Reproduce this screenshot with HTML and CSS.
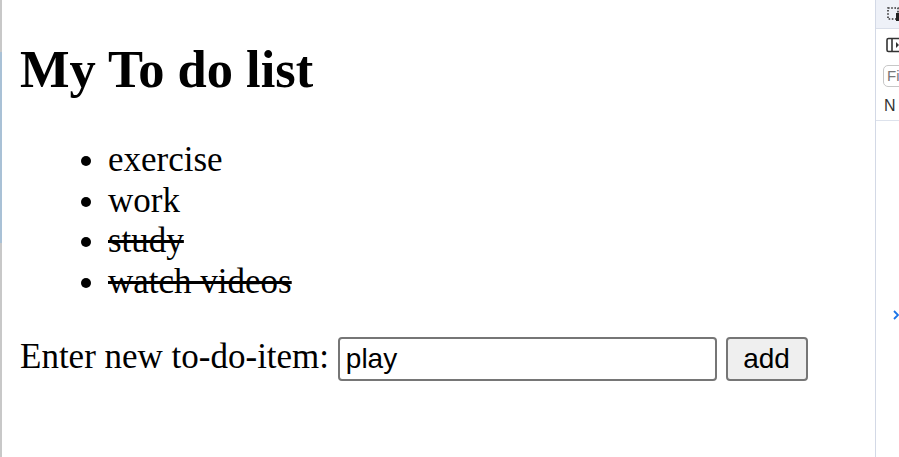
FILE: index.html
```html
<!DOCTYPE html>
<html>
<head>
<meta charset="utf-8">
<title>My To do list</title>
<link rel="stylesheet" href="styles.css">
</head>
<body>
<div class="page">
  <div class="edge">
    <div class="edge-top"></div>
    <div class="edge-mid"></div>
    <div class="edge-bot"></div>
  </div>
  <main class="main">
    <h1 class="title">My To do list</h1>
    <ul class="todos">
      <li>exercise</li>
      <li>work</li>
      <li class="done">study</li>
      <li class="done">watch videos</li>
    </ul>
    <div class="entry">Enter new to-do-item: <input class="field" type="text" value="play"> <button class="add">add</button></div>
  </main>
  <aside class="devtools">
    <div class="dt-tabs">
      <svg class="dt-select" width="14" height="14" viewBox="0 0 14 14">
        <rect x="1" y="1" width="10" height="11" fill="none" stroke="#333" stroke-width="1.6" stroke-dasharray="1.6 1.6"/>
        <path d="M9 6 L13 6 L13 14 L9 14 Z" fill="#222"/>
      </svg>
    </div>
    <div class="dt-body">
      <div class="dt-row dt-icon-row">
        <svg width="16" height="16" viewBox="0 0 16 16">
          <rect x="1" y="1.5" width="14" height="13" rx="1.5" fill="none" stroke="#333" stroke-width="1.6"/>
          <path d="M6 2 V14" stroke="#333" stroke-width="1.6"/>
          <path d="M10 5 L13 8 L10 11 Z" fill="#333"/>
        </svg>
      </div>
      <div class="dt-row">
        <div class="dt-filter">Fi</div>
      </div>
      <div class="dt-row dt-n">N</div>
      <div class="dt-sep"></div>
      <div class="dt-chevron">
        <svg width="8" height="12" viewBox="0 0 8 12"><path d="M2 2 L6 6 L2 10" fill="none" stroke="#1a73e8" stroke-width="1.8"/></svg>
      </div>
    </div>
  </aside>
</div>
</body>
</html>
```

FILE: styles.css
```css
html, body {
  margin: 0;
  padding: 0;
  background: #ffffff;
}

.page {
  display: flex;
  width: 899px;
  height: 457px;
  overflow: hidden;
}

.edge {
  width: 2px;
  display: flex;
  flex-direction: column;
  flex: none;
}

.edge-top {
  height: 52px;
  background: #c8c8c8;
}

.edge-mid {
  height: 191px;
  background: #a9c1d6;
}

.edge-bot {
  flex: 1;
  background: #c8c8c8;
}

.main {
  flex: 1;
  padding: 0 0 0 18px;
  font-family: "Liberation Serif", "Times New Roman", serif;
  color: #000;
}

.title {
  font-size: 52.5px;
  font-weight: bold;
  margin: 39px 0 0 0;
  line-height: 1.15;
}

.todos {
  font-size: 35px;
  margin: 41px 0 0 0;
  padding-left: 88px;
  line-height: 40.5px;
}

.done {
  text-decoration: line-through;
}

.entry {
  font-size: 35px;
  margin-top: 35px;
}

.field {
  box-sizing: border-box;
  font-family: "Liberation Sans", Arial, sans-serif;
  font-size: 28px;
  width: 379px;
  height: 44px;
  padding: 2px 6px;
  margin: 0;
  border: 2px solid #767676;
  border-radius: 4px;
  color: #000;
  vertical-align: baseline;
}

.add {
  box-sizing: border-box;
  font-family: "Liberation Sans", Arial, sans-serif;
  font-size: 28px;
  width: 82px;
  height: 44px;
  padding: 0;
  margin: 0;
  border: 2px solid #767676;
  border-radius: 4px;
  background: #efefef;
  color: #000;
}

.devtools {
  width: 23px;
  flex: none;
  border-left: 1px solid #d3d9e6;
  overflow: hidden;
  font-family: "Liberation Sans", Arial, sans-serif;
  background: #ffffff;
}

.dt-tabs {
  height: 28px;
  background: #eef1f8;
  border-bottom: 1px solid #d9dee9;
  display: flex;
  align-items: center;
  padding-left: 11px;
}

.dt-select {
  flex: none;
}

.dt-body {
  display: flex;
  flex-direction: column;
  width: 60px;
}

.dt-row {
  display: flex;
  align-items: center;
  padding-left: 10px;
}

.dt-icon-row {
  height: 32px;
}

.dt-filter {
  margin-left: -3px;
  margin-top: 4px;
  width: 40px;
  height: 20px;
  border: 1px solid #c7c7c7;
  border-radius: 5px;
  font-size: 15px;
  color: #777;
  line-height: 20px;
  padding-left: 3px;
}

.dt-n {
  height: 33px;
  font-size: 16px;
  color: #333;
  padding-left: 8px;
  padding-top: 4px;
  box-sizing: border-box;
}

.dt-sep {
  height: 1px;
  background: #dde2ec;
}

.dt-chevron {
  margin-top: 186px;
  padding-left: 16px;
  height: 14px;
}
```
